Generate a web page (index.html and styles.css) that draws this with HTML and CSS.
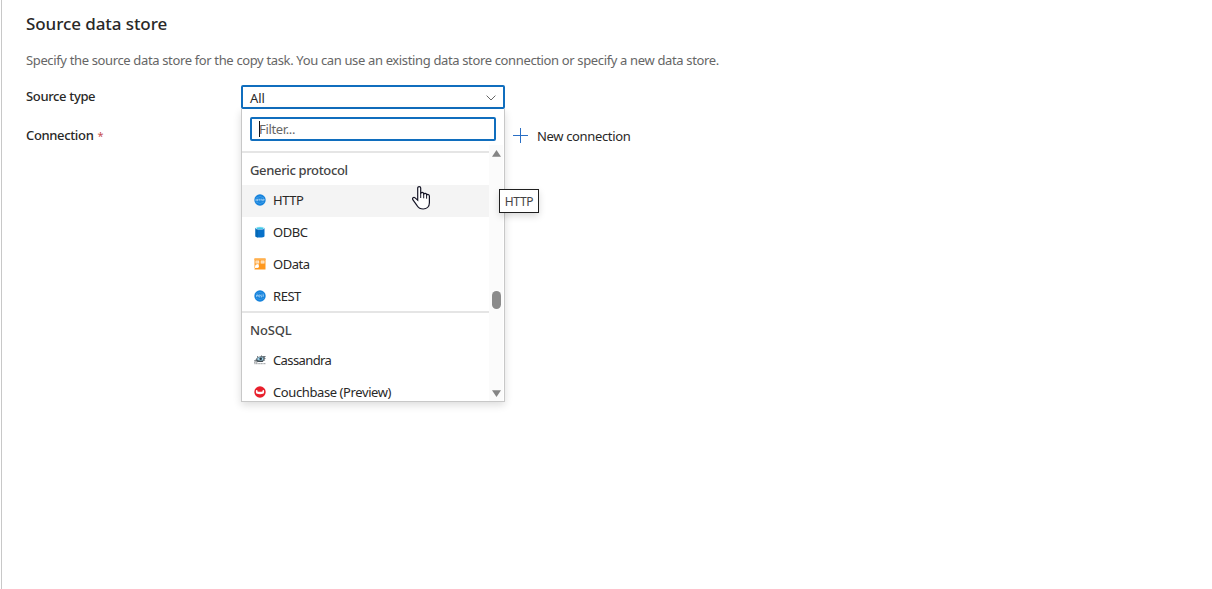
FILE: index.html
```
<!DOCTYPE html>
<html lang="en">
<head>
<meta charset="utf-8">
<title>Source data store</title>
<link rel="stylesheet" href="styles.css">
</head>
<body>
<main class="panel">
  <h1 class="title"><span>Source data store</span></h1>
  <p class="description"><span>Specify the source data store for the copy task. You can use an existing data store connection or specify a new data store.</span></p>
  <div class="field source-field">
    <label class="label label-source">Source type</label>
    <div class="select">
      <div class="select-box"><span class="select-value">All</span>
        <svg class="chevron" width="10" height="6" viewBox="0 0 10 6"><path d="M.6.6 5 5 9.400.6" fill="none" stroke="#666" stroke-width="1"/></svg>
      </div>
      <div class="dropdown">
        <div class="filter"><i class="caret"></i><span>Filter...</span></div>
        <div class="list">
          <div class="options">
            <div class="group">Generic protocol</div>
            <div class="option hovered">
              <svg class="icon" viewBox="0 0 12 12"><circle cx="6" cy="6" r="5.700" fill="#1683dc"/><path d="M2 4Q6 1 10 4M2 8Q6 11 10 8" fill="none" stroke="#4aa5ed" stroke-width=".7"/><path d="M2 4.800v2.400M2 6h1.500M3.500 4.800v2.400M4.300 5.200h1.700M5.200 5.200v2M6.300 5.200H8M7.100 5.200v2M8.700 7.200v-2h1.500v1H8.700" fill="none" stroke="#c5e4fc" stroke-width=".6"/></svg>
              <span class="w-http">HTTP</span>
            </div>
            <div class="option">
              <svg class="icon" viewBox="0 0 12 12"><path d="M1.500 2v8.300c0 1.700 9 1.700 9 0V2z" fill="#0871c9"/><path d="M1.500 2v8.300c0 .6 1 1 2.500 1.200V2z" fill="#0569b6"/><ellipse cx="6" cy="2" rx="4.500" ry="1.500" fill="#d7f4fb"/><ellipse cx="6" cy="2.200" rx="3.500" ry=".9" fill="#42cbea"/></svg>
              <span class="w-odbc">ODBC</span>
            </div>
            <div class="option">
              <svg class="icon" viewBox="0 0 12 12"><path d="M.5.500h11v11H.5z" fill="#ff981e"/><path d="M.5.500h11v1.500H.5z" fill="#ffb04d"/><path d="M1.500 2.500h3.700v3H1.500zM6.700 2.500h3.800v3H6.700z" fill="#fff0dc"/><path d="M2 4h2.500M7.200 4h2.500" stroke="#ffad4b" stroke-width=".6"/><circle cx="3" cy="8.200" r="1.900" fill="#fff"/><path d="M.5 10.500 2 9M3.200 6.500 5 7.200" stroke="#fff" stroke-width=".9"/></svg>
              <span class="w-odata">OData</span>
            </div>
            <div class="option">
              <svg class="icon" viewBox="0 0 12 12"><circle cx="6" cy="6" r="5.700" fill="#1683dc"/><path d="M2 3.700Q6 1 10 3.700M2 8.300Q6 11 10 8.300" fill="none" stroke="#3b9bea" stroke-width=".7"/><path d="M2.600 7.200V4.900h1.300v1H2.600M5.900 4.900H4.800V7h1.100M4.800 6h1M7.700 4.900h-1v1.100h1v1.100h-1M8.400 4.900H10M9.200 4.900v2.200" fill="none" stroke="#c5e4fc" stroke-width=".6"/></svg>
              <span class="w-rest">REST</span>
            </div>
            <div class="group group-nosql">NoSQL</div>
            <div class="option">
              <svg class="icon" viewBox="0 0 12 12"><path d="M1.500 5.500C3 2.500 7 1.600 12 2l-1.500 1.700 1.400.5-1.500 1.300.8.8L8 7.900H3.500z" fill="#66727a"/><ellipse cx="6.300" cy="4.900" rx="2.900" ry="1.900" fill="#9ed3ea"/><circle cx="6.700" cy="4.800" r="1.300" fill="#26343d"/><path d="M.3 6.800 9 7.300M4.200 3.200 3 2.600M6.800 2.600l1-.9" stroke="#293238" stroke-width=".9"/><path d="M0 8.300h3.600M.3 9.700h11.500" stroke="#8d9295" stroke-width=".9" stroke-dasharray="1.300 .3"/></svg>
              <span class="w-cass">Cassandra</span>
            </div>
            <div class="option">
              <svg class="icon" viewBox="0 0 12 12"><circle cx="6" cy="6" r="5.700" fill="#e8202c"/><path d="M2 4.200q1-.4 1.500.2v1.200q2.500.4 5 0V4.400q.5-.6 1.500-.2.400 1.800-.3 3.400Q6 8.800 2.300 7.600q-.7-1.600-.3-3.400z" fill="#fff"/></svg>
              <span class="w-couch">Couchbase (Preview)</span>
            </div>
          </div>
          <div class="scrollbar">
            <svg width="10" height="8" viewBox="0 0 10 8"><path d="M5.500 1 10 7.700H1z" fill="#858585"/></svg>
            <i class="thumb"></i>
            <svg width="10" height="8" viewBox="0 0 10 8"><path d="M5.500 7.900 10 1.200H1z" fill="#858585"/></svg>
          </div>
        </div>
      </div>
    </div>
  </div>
  <div class="field connection-field">
    <label class="label"><span class="label-connection">Connection</span><span class="required">*</span></label>
    <button class="new-button">
      <svg width="15" height="15" viewBox="0 0 15 15"><path d="M7.500 0v15M0 7.500h15" stroke="#2a6fc5" stroke-width="1"/></svg>
      <span>New connection</span>
    </button>
  </div>
</main>
<div class="tooltip"><span>HTTP</span></div>
<svg class="cursor" width="20" height="26" viewBox="0 0 20 26"><path d="M5.700 15.200V3.100c0-2.100 3-2.100 3 0v5.700c.2-1.800 2.800-1.800 3 .1v.5c.5-1.500 2.800-1.300 2.900.3v.5c.6-1.300 2.800-.9 2.800 1v6.500c0 4-2.900 6.300-6.200 6.300-3 0-4.800-1.200-6.100-3.300l-4.300-6c-.9-1.600.9-2.900 2.300-1.800z" fill="#fff" stroke="#151526" stroke-width="1.200"/><path d="M8.700 8v5M11.700 9v4.300M14.600 10v3.700" stroke="#151526" stroke-width="1"/></svg>
</body>
</html>
```
FILE: styles.css
```
* { box-sizing: border-box; }
html, body { margin: 0; height: 100%; overflow: hidden; background: #fff; }
body { padding-left: 1px; font-family: "Noto Sans", "Open Sans", sans-serif; font-size: 13px; color: #292827; }
.panel { height: 100%; border-left: 1px solid #c8c8c8; padding: 12px 0 0 24px; }
.title { margin: 0; font-size: 17px; line-height: 24px; font-weight: 550; letter-spacing: -.08px; white-space: nowrap; }
.description { margin: 14px 0 0; line-height: 20px; color: #666; white-space: nowrap; letter-spacing: -.37px; word-spacing: .07px; }
.field { display: flex; }
.source-field { margin-top: 15px; height: 24px; }
.label { width: 215px; font-weight: 550; line-height: 22px; white-space: nowrap; }
.label-source, .label-connection { letter-spacing: -.35px; }
.required { margin-left: 4px; color: #c75050; font-weight: 400; font-size: 11px; }
.select { position: relative; width: 264px; height: 24px; }
.select-box { display: flex; height: 24px; align-items: center; justify-content: space-between; padding: 1px 7px 0; border: 2px solid #106ebe; border-radius: 2px; }
.select-value { letter-spacing: -.1px; }
.dropdown { position: absolute; top: 24px; left: 0; z-index: 1; width: 264px; height: 293px; padding: 8px 0 0; border: 1px solid #c8c8c8; border-top: 0; background: #fff; box-shadow: 0 3px 8px rgba(0,0,0,.14); }
.filter { display: flex; align-items: center; width: 246px; height: 24px; margin-left: 8px; padding-left: 7px; border: 2px solid #106ebe; border-radius: 2px; color: #666; letter-spacing: -.35px; }
.caret { width: 1px; height: 16px; margin-right: -1px; background: #111; }
.list { display: flex; height: 256px; margin-top: 4px; overflow: hidden; }
.options { width: 247px; padding-top: 6px; }
.group { height: 34px; padding: 3px 0 0 8px; border-top: 2px solid #e5e5e5; color: #444; font-weight: 550; line-height: 29px; letter-spacing: -.35px; }
.group-nosql { letter-spacing: -.15px; }
.option + .group { margin-top: -2px; }
.option { display: flex; height: 32px; align-items: center; padding: 0 0 2px 12px; line-height: 30px; white-space: nowrap; }
.hovered { background: #f4f4f4; }
.w-http, .w-odbc, .w-rest { letter-spacing: -.45px; }
.w-odata { letter-spacing: -.5px; }
.w-cass { letter-spacing: -.6px; }
.w-couch { letter-spacing: -.4px; }
.icon { width: 12px; height: 12px; margin-right: 7px; flex: none; }
.scrollbar { display: flex; flex-direction: column; align-items: center; justify-content: space-between; width: 14px; padding: 4px 0; background: #fbfbfb; }
.thumb { width: 9px; height: 18px; margin-top: 53px; border-radius: 5px; background: #8b8b8b; }
.connection-field { margin-top: 15px; }
.new-button { display: flex; align-items: center; height: 24px; margin-left: 272px; padding: 0; border: 0; background: none; font: inherit; letter-spacing: -.35px; color: inherit; white-space: nowrap; }
.new-button svg { margin-right: 9px; margin-top: -2px; }
.tooltip { position: absolute; left: 499px; top: 189px; z-index: 2; width: 40px; height: 24px; border: 1px solid #202020; background: #fff; text-align: center; font-size: 12px; line-height: 23px; letter-spacing: -.3px; color: #444; box-shadow: 0 3px 7px rgba(0,0,0,.15); }
.cursor { position: absolute; left: 412px; top: 185px; z-index: 3; }
```
